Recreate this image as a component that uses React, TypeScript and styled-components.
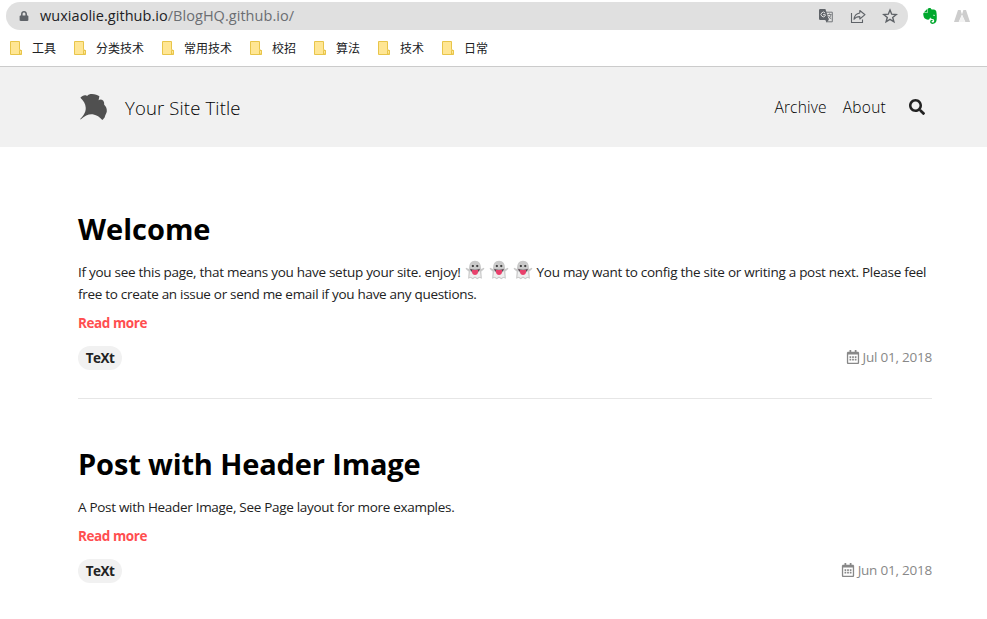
import React from "react";
import styled, { createGlobalStyle } from "styled-components";
import { FaLock, FaRegCalendarAlt, FaSearch } from "react-icons/fa";
import { SiEvernote } from "react-icons/si";

const GlobalStyle = createGlobalStyle`
  * { box-sizing: border-box; }
  body {
    margin: 0;
    background: #fff;
    color: #222;
    font-family: "Open Sans", "Noto Sans", "Noto Sans CJK SC", sans-serif;
    overflow: hidden;
  }
`;

const Page = styled.div`
  width: 987px;
  height: 619px;
  overflow: hidden;
`;

const AddressRow = styled.div`
  display: flex;
  align-items: center;
  height: 32px;
  padding-left: 6px;
`;

const AddressPill = styled.div`
  display: flex;
  align-items: center;
  width: 902px;
  height: 28px;
  padding: 0 10px 0 13px;
  border-radius: 14px;
  background: #e0e0e0;
  color: #5f6368;
`;

const Url = styled.div`
  flex: 1;
  margin-left: 11px;
  font-size: 14.5px;
  line-height: 20px;
  letter-spacing: 0.04px;
  white-space: nowrap;
  color: #6b6e72;
`;

const Host = styled.span`
  color: #202124;
`;

const PillIcons = styled.div`
  display: flex;
  gap: 16px;
  svg { display: block; }
`;

const Extensions = styled.div`
  display: flex;
  align-items: center;
  gap: 16px;
  margin-left: 14px;
  svg { display: block; }
`;

const Bookmarks = styled.nav`
  display: flex;
  align-items: center;
  gap: 18px;
  height: 35px;
  padding: 0 10px 2px;
  border-bottom: 1px solid #cbcbcb;
`;

const Bookmark = styled.div`
  display: flex;
  align-items: center;
  gap: 10px;
  font: 12px/18px "Noto Sans CJK SC", sans-serif;
  color: #202124;
  white-space: nowrap;
`;

const Header = styled.header`
  display: flex;
  align-items: center;
  height: 80px;
  padding: 0 62px 0 78px;
  background: #f1f1f1;
  color: #222;
`;

const SiteTitle = styled.div`
  flex: 1;
  margin: 2px 0 0 17px;
  font-size: 18.5px;
  font-weight: 300;
  line-height: 28px;
  letter-spacing: 0.15px;
  color: #000;
`;

const NavLink = styled.a<{ $spacing: number }>`
  margin-right: 16px;
  font-size: 15.5px;
  font-weight: 300;
  line-height: 24px;
  letter-spacing: ${(p) => p.$spacing}px;
  color: #000;
`;

const SearchIcon = styled(FaSearch)`
  display: block;
  margin-left: 7px;
`;

const Articles = styled.main`
  width: 854px;
  margin: 62px 0 0 78px;
`;

const Article = styled.article`
  padding-bottom: 28px;
  margin-bottom: 45px;
  border-bottom: 1px solid #e6e6e6;
  &:last-child { border-bottom: 0; }
`;

const Heading = styled.h2<{ $spacing: number }>`
  margin: 0 0 12px;
  font-size: 29px;
  font-weight: 700;
  line-height: 40px;
  letter-spacing: ${(p) => p.$spacing}px;
  color: #000;
`;

const Excerpt = styled.p`
  margin: 0 0 7px;
  font-size: 13.5px;
  line-height: 22px;
`;

const Line = styled.span<{ $spacing: number }>`
  display: flex;
  align-items: center;
  height: 22px;
  white-space: pre;
  letter-spacing: ${(p) => p.$spacing}px;
`;

const Ghosts = styled.span`
  display: inline-flex;
  gap: 4px;
  margin: -4px 4px 0 4px;
`;

const ReadMore = styled.a`
  display: block;
  font-size: 13.5px;
  font-weight: 700;
  line-height: 22px;
  letter-spacing: -0.42px;
  color: #ff4e50;
`;

const Meta = styled.div`
  display: flex;
  align-items: center;
  justify-content: space-between;
  height: 24px;
  margin-top: 12px;
`;

const Tag = styled.span`
  width: 44px;
  height: 24px;
  border-radius: 12px;
  background: #f1f1f1;
  font-size: 13.5px;
  font-weight: 700;
  line-height: 24px;
  letter-spacing: -0.5px;
  text-align: center;
`;

const PostDate = styled.span`
  display: flex;
  align-items: center;
  gap: 3px;
  height: 22px;
  margin-top: -2px;
  font-size: 13.5px;
  line-height: 22px;
  letter-spacing: -0.22px;
  color: #888;
`;

const FolderIcon = () => (
  <svg width="12" height="14" viewBox="0 0 12 14">
    <path d="M.5.5h9v8.2l2 .8v4h-11z" fill="#ffe694" stroke="#e8c54a" />
    <path d="M9.5 13V9.5h2V13z" fill="#ffe694" stroke="#e8c54a" />
  </svg>
);

const TranslateIcon = () => (
  <svg width="16" height="16" viewBox="0 0 16 16">
    <path d="M7 4.2h7.3v9.6H8.5" fill="none" stroke="#74777b" />
    <path d="M2.2 1h5.2l3.5 11H2.2A1.2 1.2 0 0 1 1 10.800V2.200A1.200 1.200 0 0 1 2.200 1z" fill="#5f6368" />
    <path d="M7.300 12h3.400l-2.100 2.600z" fill="#5f6368" />
    <path d="M7.200 5.100A2.300 2.300 0 1 0 7.300 7.700V6.700H5" fill="none" stroke="#e0e0e0" />
    <path d="M9.500 6.500h4M11.500 5.500v1M13 6.500c-.4 2-1.500 3.500-2.700 4.500M10.200 7.800l3 3.300" fill="none" stroke="#74777b" strokeWidth=".9" />
  </svg>
);

const ShareIcon = () => (
  <svg width="16" height="16" viewBox="0 0 16 16" fill="none" stroke="#5f6368" strokeWidth="1.1">
    <path d="M1.500 5v9.500h11V11.500" />
    <path d="M9.800 2.500 15 6.700 9.800 11V8.600C7 8.600 5.200 9.500 4 11.300 4.400 7.800 6.400 5.500 9.800 5z" strokeLinejoin="round" />
  </svg>
);

const StarIcon = () => (
  <svg width="16" height="16" viewBox="0 0 16 16" fill="none" stroke="#5f6368" strokeWidth="1.4">
    <path d="m8 2 1.700 4.200 4.500.3-3.500 2.900 1.200 4.400L8 11.400l-3.900 2.400 1.200-4.400-3.500-2.900 4.500-.3z" />
  </svg>
);

const PeaksIcon = () => (
  <svg width="16" height="14" viewBox="0 0 16 14">
    <path d="M4 1h2.600L8 5.500 4.600 13H0z" fill="#cdcdcd" />
    <path d="M9.400 1H12l4 12h-4.600L8 5.500z" fill="#cdcdcd" />
    <path d="m8 6 3 7H5z" fill="#f3f3f3" />
  </svg>
);

const LeafLogo = () => (
  <svg width="30" height="30" viewBox="0 0 30 30">
    <path
      d="M2.400 5.800C4 3.800 6.200 2.900 8.300 3.500L9.200 4.100C10 2.400 12 2 14 2C16.800 2 20 3 21.400 4.300L20.600 8.200L22 7.600C25 7.600 26.500 9.500 26.200 12.800C28.200 14.500 29 17 28.800 19.500C28.500 21.500 27.400 22.500 27 24.200C26.700 25.800 25.500 27 24.300 27.900C21.700 25 18.700 23.200 15.500 22.500C11.200 21.800 7.200 23.400 2.600 27.600L2.200 27.100C6.400 22.700 8 19.400 7.700 15.600C7.500 11.800 5.400 8.500 2.400 5.800Z"
      fill="#505050"
    />
  </svg>
);

const GhostIcon = () => (
  <svg width="20" height="20" viewBox="0 0 20 20">
    <path d="M4 9C4 3.500 6 .8 10 .8S16 3.500 16 9l3-1.300c1 .6-.3 2.300-2.700 3.700l.6 7.400-2.400-1-2.200 1.500-2.300-1.500-2.200 1.500-2.300-1.500-2.400 1 .6-7.400C1.300 10 0 8.300 1 7.700z" fill="#c9c9c9" />
    <path d="m5 11 1.500 1.500h7L15 11l.6 6.300-1.300-.6-2 1.300-2.300-1.400L7.700 18l-2-1.300-1.300.6z" fill="#efefef" />
    <circle cx="7.600" cy="6" r="1.700" fill="#e8e8e8" />
    <circle cx="12.500" cy="6" r="1.700" fill="#e8e8e8" />
    <circle cx="7.800" cy="6" r="1.200" fill="#444" />
    <circle cx="12.300" cy="6" r="1.200" fill="#444" />
    <path d="M5 8.800q5 2 10 0-.5 3-3 3.700H8Q5.500 11.800 5 8.800z" fill="#5a4650" />
    <path d="M7 10h6v2c0 4-6 4-6 0z" fill="#e8416c" />
  </svg>
);

const bookmarks = ["工具", "分类技术", "常用技术", "校招", "算法", "技术", "日常"];

const PostFooter = ({ date }: { date: string }) => (
  <Meta>
    <Tag>TeXt</Tag>
    <PostDate>
      <FaRegCalendarAlt size={14} />
      {date}
    </PostDate>
  </Meta>
);

export default function App() {
  return (
    <Page>
      <GlobalStyle />
      <AddressRow>
        <AddressPill>
          <FaLock size={10} />
          <Url>
            <Host>wuxiaolie.github.io</Host>/BlogHQ.github.io/
          </Url>
          <PillIcons>
            <TranslateIcon />
            <ShareIcon />
            <StarIcon />
          </PillIcons>
        </AddressPill>
        <Extensions>
          <SiEvernote size={16} color="#00a82d" />
          <PeaksIcon />
        </Extensions>
      </AddressRow>
      <Bookmarks>
        {bookmarks.map((name) => (
          <Bookmark key={name}>
            <FolderIcon />
            {name}
          </Bookmark>
        ))}
      </Bookmarks>
      <Header>
        <LeafLogo />
        <SiteTitle>Your Site Title</SiteTitle>
        <NavLink $spacing={0.2}>Archive</NavLink>
        <NavLink $spacing={0.25}>About</NavLink>
        <SearchIcon size={16} />
      </Header>
      <Articles>
        <Article>
          <Heading $spacing={0}>Welcome</Heading>
          <Excerpt>
            <Line $spacing={-0.28}>
              If you see this page, that means you have setup your site. enjoy!
              <Ghosts>
                <GhostIcon />
                <GhostIcon />
                <GhostIcon />
              </Ghosts>
              You may want to config the site or writing a post next. Please feel
            </Line>
            <Line $spacing={-0.3}>free to create an issue or send me email if you have any questions.</Line>
          </Excerpt>
          <ReadMore>Read more</ReadMore>
          <PostFooter date="Jul 01, 2018" />
        </Article>
        <Article>
          <Heading $spacing={-0.14}>Post with Header Image</Heading>
          <Excerpt>
            <Line $spacing={-0.3}>A Post with Header Image, See Page layout for more examples.</Line>
          </Excerpt>
          <ReadMore>Read more</ReadMore>
          <PostFooter date="Jun 01, 2018" />
        </Article>
      </Articles>
    </Page>
  );
}
